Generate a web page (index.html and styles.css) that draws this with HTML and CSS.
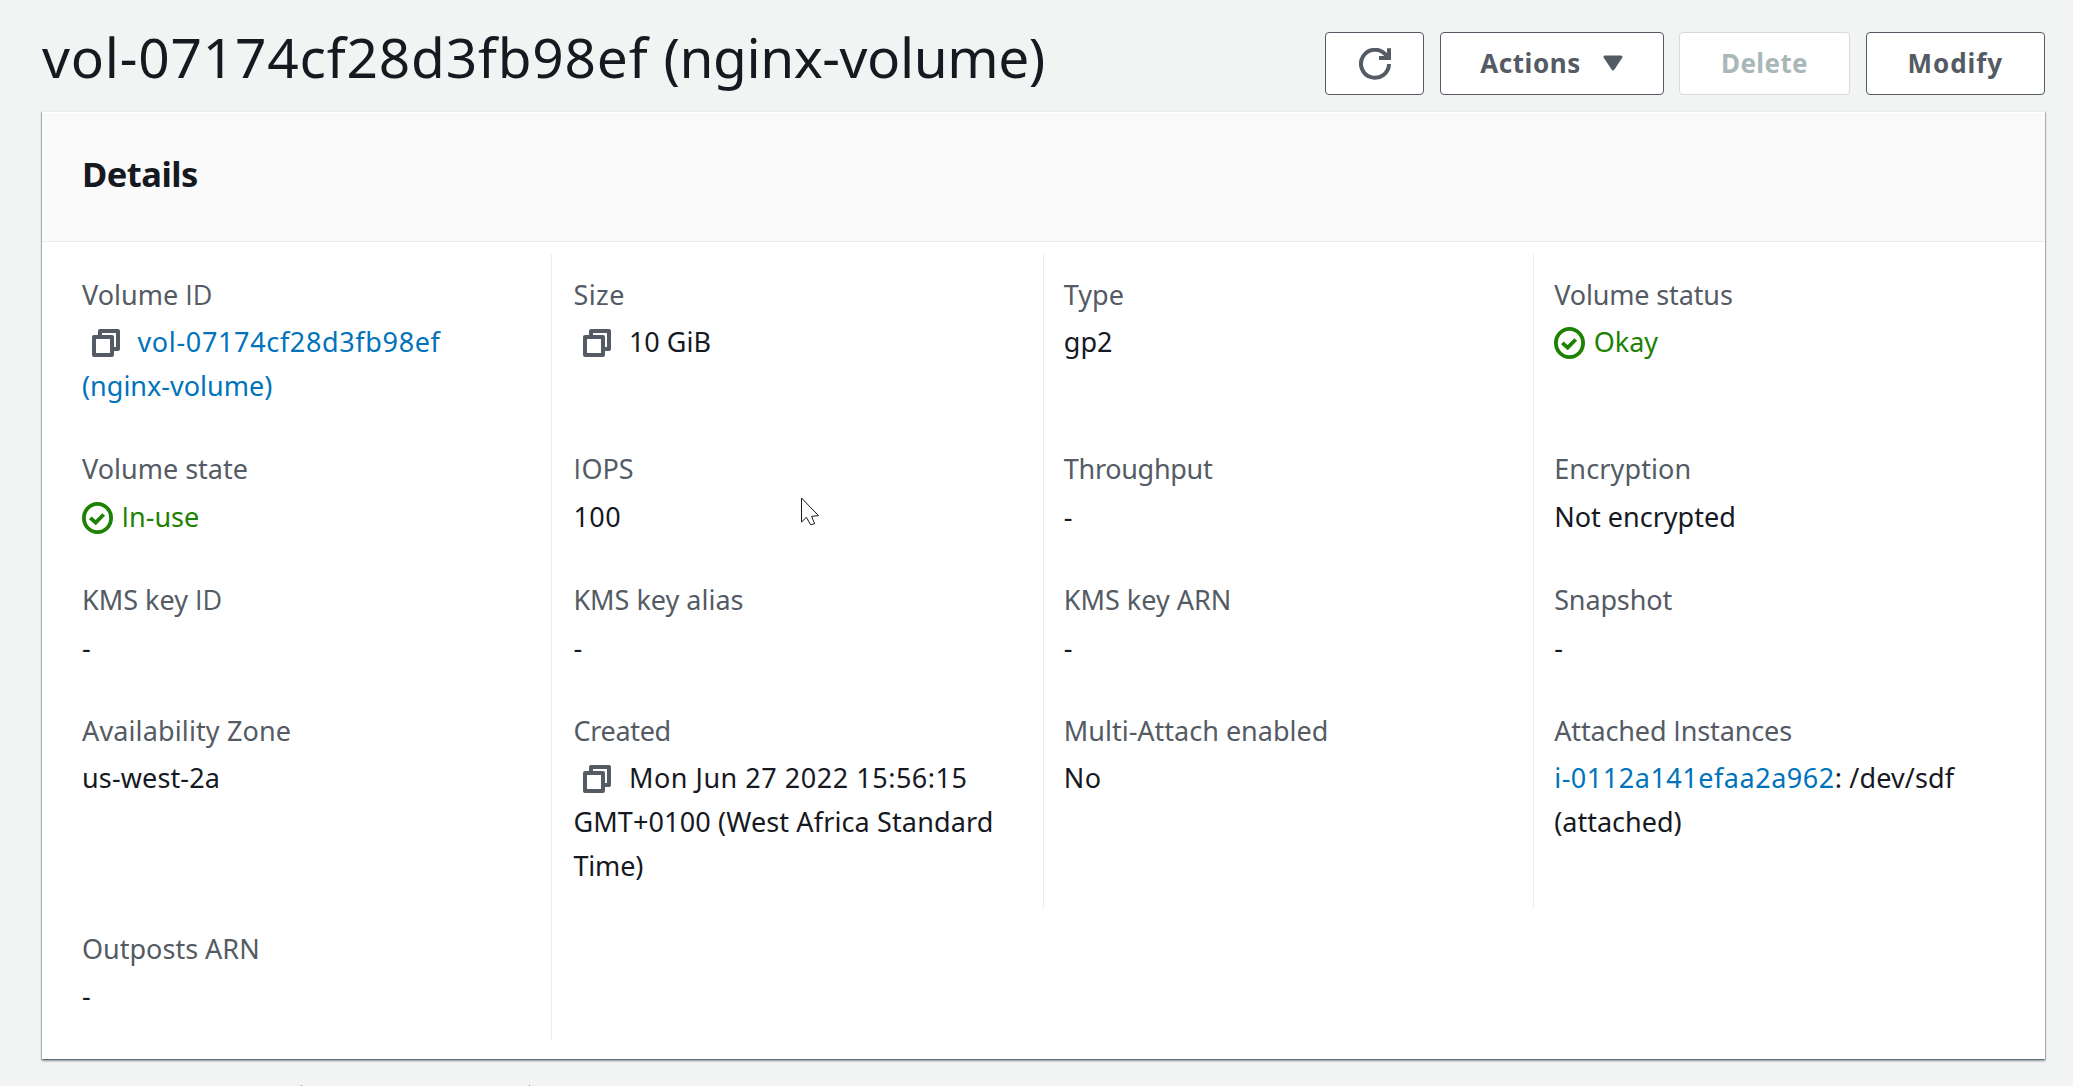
FILE: index.html
```html
<!DOCTYPE html>
<html lang="en">
<head>
<meta charset="utf-8">
<title>vol-07174cf28d3fb98ef (nginx-volume)</title>
<link rel="stylesheet" href="styles.css">
</head>
<body>
<svg class="sprite" aria-hidden="true">
  <symbol id="copy" viewBox="0 0 28 28"><path d="M8 7V2h18v18h-5" /><path d="M2 8h18v18H2z" /></symbol>
  <symbol id="check" viewBox="0 0 31 32"><ellipse cx="15.5" cy="16" rx="13.6" ry="14.1" /><path d="M8.3 15.8l5.4 4.9 8-8.2" /></symbol>
</svg>
<main class="page">
  <header class="page-header">
    <h1>vol-07174cf28d3fb98ef <span class="volume-name">(nginx-volume)</span></h1>
    <div class="actions">
      <button class="btn btn-refresh" aria-label="Refresh"><svg class="refresh" viewBox="0 0 32 32"><path d="M30 16A14 14 0 1 1 26.4 6.400L29 9" /><path d="M30 .3V10H20" /></svg></button>
      <button class="btn btn-actions">Actions<svg class="caret" viewBox="0 0 20 16"><path d="M2 2h16l-8 12z" /></svg></button>
      <button class="btn btn-delete" disabled>Delete</button>
      <button class="btn btn-modify">Modify</button>
    </div>
  </header>
  <section class="panel">
    <div class="panel-header"><h2>Details</h2></div>
    <dl class="grid">
      <div class="cell first"><dt>Volume <span class="sans-i">ID</span></dt><dd><svg class="copy"><use href="#copy" /></svg><a><span class="volume-id">vol-07174cf28d3fb98ef</span> (nginx-volume)</a></dd></div>
      <div class="cell"><dt class="loose">Size</dt><dd><svg class="copy"><use href="#copy" /></svg>10 GiB</dd></div>
      <div class="cell"><dt>Type</dt><dd>gp2</dd></div>
      <div class="cell"><dt class="snug">Volume status</dt><dd class="ok"><svg class="check"><use href="#check" /></svg>Okay</dd></div>

      <div class="cell first"><dt>Volume state</dt><dd class="ok"><svg class="check"><use href="#check" /></svg><span class="sans-i">I</span>n-use</dd></div>
      <div class="cell"><dt><span class="sans-i loose">I</span>OPS</dt><dd class="code">100</dd></div>
      <div class="cell"><dt class="tight">Throughput</dt><dd>-</dd></div>
      <div class="cell"><dt class="wide">Encryption</dt><dd>Not encrypted</dd></div>

      <div class="cell first"><dt>KMS key <span class="sans-i">ID</span></dt><dd>-</dd></div>
      <div class="cell"><dt>KMS key alias</dt><dd>-</dd></div>
      <div class="cell"><dt>KMS key ARN</dt><dd>-</dd></div>
      <div class="cell"><dt class="snug">Snapshot</dt><dd>-</dd></div>

      <div class="cell first"><dt class="wide">Availability Zone</dt><dd class="wide">us-west-2a</dd></div>
      <div class="cell"><dt class="tight">Created</dt><dd><svg class="copy"><use href="#copy" /></svg><span class="code">Mon Jun 27 2022 15:56:15</span> <span class="wide">GMT+0100 (West Africa Standard</span> <span class="snug">Time)</span></dd></div>
      <div class="cell"><dt>Multi-Attach enabled</dt><dd class="loose">No</dd></div>
      <div class="cell"><dt class="snug">Attached <span class="sans-i">I</span>nstances</dt><dd><a class="code">i-0112a141efaa2a962</a><span class="wide">: /dev/sdf</span> (attached)</dd></div>

      <div class="cell first"><dt>Outposts ARN</dt><dd>-</dd></div>
    </dl>
  </section>
  <div class="next-section"><i></i><i></i></div>
</main>
<svg class="cursor" viewBox="-1 -1 21 30"><path d="M.5 0l17 17.700-6.900.6 3 7.400-4 1-4.200-7.400-4.900 4.700z" /></svg>
</body>
</html>
```
FILE: styles.css
```css
* { box-sizing: border-box; }

body {
  margin: 0;
  height: 1086px;
  overflow: hidden;
  background: #f2f3f3;
  color: #16191f;
  font: 27px/43.6px "Noto Sans", "Open Sans", sans-serif;
}

.sprite { display: none; }

.page { padding: 0 28px 0 42px; }

.page-header {
  display: flex;
  justify-content: space-between;
  height: 111px;
}

h1 {
  margin: 19px 0 0;
  font-size: 55px;
  font-weight: 400;
  line-height: 75px;
  letter-spacing: .8px;
  white-space: nowrap;
}
.volume-name { letter-spacing: -.45px; }

.actions {
  display: flex;
  gap: 15.500px;
  padding-top: 32px;
}

.btn {
  display: flex;
  align-items: center;
  justify-content: center;
  height: 63px;
  padding: 0 0 1px;
  border: 1px solid #545b64;
  border-radius: 4px;
  background: #fff;
  color: #545b64;
  font: 700 26px/36px "Noto Sans", "Open Sans", sans-serif;
  letter-spacing: .55px;
}
.btn-refresh { width: 99px; }
.btn-actions { width: 224px; }
.btn-delete { width: 171px; border-color: #d5dbdb; color: #aab7b8; letter-spacing: .38px; }
.btn-modify { width: 179.500px; letter-spacing: .91px; }

.refresh {
  width: 32px;
  height: 32px;
  margin-top: 1px;
  fill: none;
  stroke: #545b64;
  stroke-width: 4;
}
.caret {
  width: 20px;
  height: 16px;
  margin-left: 22px;
  fill: #545b64;
  stroke: #545b64;
  stroke-width: 3;
  stroke-linejoin: round;
}

.panel {
  height: 948px;
  border-top: 1px solid #eaeded;
  background: #fff;
  box-shadow: 0 2px 2px rgba(0, 28, 36, .4), 1px 1px 1px rgba(0, 28, 36, .2), -1px 1px 1px rgba(0, 28, 36, .2);
}

.panel-header {
  height: 130px;
  padding: 39px 40px 0;
  border-top: 1px solid #fff;
  border-bottom: 1px solid #eaeded;
  background: #fafafa;
}
h2 {
  margin: 0;
  font-size: 34.500px;
  font-weight: 700;
  line-height: 44px;
  letter-spacing: -.5px;
}

.grid {
  display: grid;
  grid-template-columns: repeat(4, 490.400px);
  margin: 0;
  padding: 12px 20px 0;
}
.cell {
  padding: 18.800px 20px 20.800px;
  border-left: 1px solid #eaeded;
}
.cell.first { border-left: 0; border-right: 1px solid #eaeded; }
.cell.first + .cell { border-left-color: transparent; }
dt { margin-bottom: 4px; color: #545b64; }
dd { margin: 0; }

a { color: #0073bb; }
.ok { color: #1d8102; }
.code { letter-spacing: .52px; }
.volume-id { letter-spacing: .65px; }
.loose { letter-spacing: .45px; }
.wide { letter-spacing: .13px; }
.snug { letter-spacing: -.14px; }
.tight { letter-spacing: -.3px; }
.sans-i { font-family: "Open Sans", sans-serif; }

.copy {
  width: 28px;
  height: 28px;
  margin: 0 18px 0 9.500px;
  vertical-align: -5px;
  fill: none;
  stroke: #545b64;
  stroke-width: 4;
  stroke-linejoin: round;
}
.check {
  width: 31px;
  height: 32px;
  margin-right: 8.500px;
  vertical-align: -7px;
  fill: none;
  stroke: #1d8102;
  stroke-width: 3.800;
}

.next-section {
  display: flex;
  gap: 227px;
  padding: 26px 0 0 259px;
}
.next-section i { width: 1px; height: 1px; background: #8a9097; }

.cursor {
  position: absolute;
  left: 800px;
  top: 497px;
  width: 21px;
  height: 30px;
  fill: #fff;
  stroke: #16191f;
  stroke-width: 1;
}
```
